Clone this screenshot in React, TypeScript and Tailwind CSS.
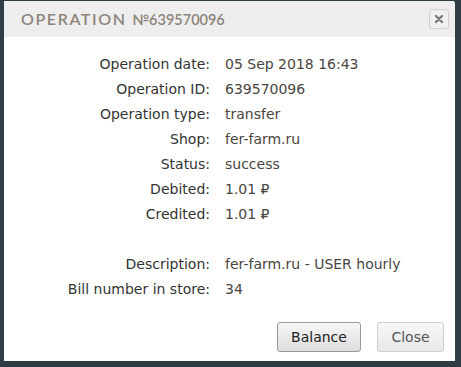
import React from 'react';

const rows: [string, string][] = [
  ['Operation date:', '05 Sep 2018 16:43'],
  ['Operation ID:', '639570096'],
  ['Operation type:', 'transfer'],
  ['Shop:', 'fer-farm.ru'],
  ['Status:', 'success'],
  ['Debited:', '1.01 ₽'],
  ['Credited:', '1.01 ₽'],
  ['', ''],
  ['Description:', 'fer-farm.ru - USER hourly'],
  ['Bill number in store:', '34'],
];

export default function App() {
  return (
    <div className="w-[461px] h-[367px] bg-[#2f3e46] pt-px pl-1 overflow-hidden">
      <div className="w-[451px] h-[360px] bg-white rounded-tr-[3px] flex flex-col">
        <div className="h-[36px] bg-[#eeeeee] flex items-center justify-between pl-[17px] pr-[6px] rounded-tr-[3px]">
          <h1
            className="text-[16px] tracking-[1.6px] text-[#8c8479] font-semibold"
            style={{ fontFamily: '"Lato", sans-serif' }}
          >
            OPERATION <span className="tracking-[0px] text-[14.5px]">№639570096</span>
          </h1>
          <button className="w-[20px] h-[20px] rounded-[3px] border border-[#d0d0d0] bg-[#f0f0f0] flex items-center justify-center">
            <svg width="10" height="10" viewBox="0 0 10 10">
              <path d="M2 2 L8 8 M8 2 L2 8" stroke="#7a7a7a" strokeWidth="2.4" strokeLinecap="round" />
            </svg>
          </button>
        </div>
        <div
          className="pt-[15px] flex flex-col text-[14px]"
          style={{ fontFamily: '"DejaVu Sans", sans-serif' }}
        >
          {rows.map(([label, value], i) => (
            <div key={i} className="h-[25px] flex items-center">
              <div className="w-[206px] text-right text-[#333333]">{label}</div>
              <div className="pl-[15px] text-[#4a4540]">{value}</div>
            </div>
          ))}
        </div>
        <div
          className="mt-auto mb-[9px] flex justify-end gap-[16px] pr-[11px] text-[14px]"
          style={{ fontFamily: '"DejaVu Sans", sans-serif' }}
        >
          <button className="w-[84px] h-[30px] rounded-[3px] border border-[#9a9a9a] bg-gradient-to-b from-[#f6f6f6] to-[#dedede] text-[#222]">
            Balance
          </button>
          <button className="w-[67px] h-[30px] rounded-[3px] border border-[#cfcfcf] bg-gradient-to-b from-[#f8f8f8] to-[#e8e8e8] text-[#555]">
            Close
          </button>
        </div>
      </div>
    </div>
  );
}
